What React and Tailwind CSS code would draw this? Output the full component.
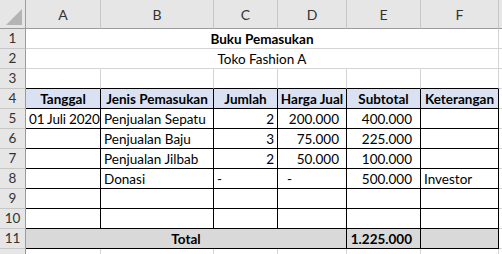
import React from 'react';

const colLetters = ['A', 'B', 'C', 'D', 'E', 'F'];

const hdr = 'bg-[#e6e6e6] text-[#333] flex items-center justify-center';
const grid = 'border-r border-b border-[#d4d4d4]';
const box = 'border-r border-b border-black';

const RowHead = ({ n }) => (
    <div className={`${hdr} border-b border-r border-b-[#c6c6c6] border-r-[#9b9b9b]`}>{n}</div>
);

const Cell = ({ className = '', children }) => (
    <div className={`flex items-center pt-px px-[3px] whitespace-nowrap overflow-hidden ${className}`}>{children}</div>
);

const tableRows = [
    ['01 Juli 2020', 'Penjualan Sepatu', '2', '200.000', '400.000', ''],
    ['', 'Penjualan Baju', '3', '75.000', '225.000', ''],
    ['', 'Penjualan Jilbab', '2', '50.000', '100.000', ''],
    ['', 'Donasi', '-', '-', '500.000', 'Investor'],
    ['', '', '', '', '', ''],
    ['', '', '', '', '', ''],
];

const App = () => {
    return (
        <div className="w-[502px] h-[254px] overflow-hidden bg-white text-black text-[13.5px] font-['Lato','Open_Sans',sans-serif]">
            <div className="grid grid-cols-[26px_75px_113px_64px_69px_74px_78px_3px] grid-rows-[29px_repeat(12,20px)]">
                {/* column headers */}
                <div className="bg-[#e6e6e6] border-r border-b border-r-[#9b9b9b] border-b-[#9b9b9b] relative">
                    <div className="absolute right-[3px] bottom-[3px] w-0 h-0 border-l-[16px] border-l-transparent border-b-[16px] border-b-[#b4b4b4]" />
                </div>
                {colLetters.map((c) => (
                    <div key={c} className={`${hdr} text-[14px] border-r border-b border-r-[#c6c6c6] border-b-[#9b9b9b]`}>{c}</div>
                ))}
                <div className="bg-[#e6e6e6] border-b border-b-[#9b9b9b]" />

                {/* row 1 */}
                <RowHead n={1} />
                <Cell className={`col-span-6 justify-center font-bold ${grid}`}>Buku Pemasukan</Cell>
                <div className="border-b border-[#d4d4d4]" />

                {/* row 2 */}
                <RowHead n={2} />
                <Cell className={`col-span-6 justify-center ${grid}`}>Toko Fashion A</Cell>
                <div className="border-b border-[#d4d4d4]" />

                {/* row 3 */}
                <RowHead n={3} />
                {colLetters.map((c) => (
                    <div key={c} className="border-r border-b border-r-[#d4d4d4] border-b-black" />
                ))}
                <div className="border-b border-[#d4d4d4]" />

                {/* row 4 header */}
                <RowHead n={4} />
                {['Tanggal', 'Jenis Pemasukan', 'Jumlah', 'Harga Jual', 'Subtotal', 'Keterangan'].map((t) => (
                    <Cell key={t} className={`justify-center font-bold bg-[#d9e1f2] ${box}`}>{t}</Cell>
                ))}
                <div className="border-b border-[#d4d4d4]" />

                {/* rows 5 - 10 */}
                {tableRows.map((r, i) => (
                    <React.Fragment key={i}>
                        <RowHead n={i + 5} />
                        <Cell className={`tracking-[-0.2px] ${box}`}>{r[0]}</Cell>
                        <Cell className={box}>{r[1]}</Cell>
                        <Cell className={`${r[2] === '-' ? 'justify-start' : 'justify-end'} ${box}`}>{r[2]}</Cell>
                        <Cell className={`${r[3] === '-' ? 'justify-start pl-[9px]' : 'justify-end pr-[7px]'} ${box}`}>{r[3]}</Cell>
                        <Cell className={`justify-end pr-[8px] ${box}`}>{r[4]}</Cell>
                        <Cell className={box}>{r[5]}</Cell>
                        <div className="border-b border-[#d4d4d4]" />
                    </React.Fragment>
                ))}

                {/* row 11 total */}
                <RowHead n={11} />
                <Cell className={`col-span-4 justify-center font-bold bg-[#d9d9d9] ${box}`}>Total</Cell>
                <Cell className={`justify-end pr-[8px] font-bold bg-[#d9d9d9] ${box}`}>1.225.000</Cell>
                <Cell className={`bg-[#d9d9d9] ${box}`} />
                <div className="border-b border-[#d4d4d4]" />

                {/* row 12 (cut off by the window) */}
                <div className="bg-[#e6e6e6] border-r border-r-[#9b9b9b]" />
                {colLetters.map((c) => (
                    <div key={c} className="border-r border-[#d4d4d4]" />
                ))}
                <div />
            </div>
        </div>
    );
};

export default App;
